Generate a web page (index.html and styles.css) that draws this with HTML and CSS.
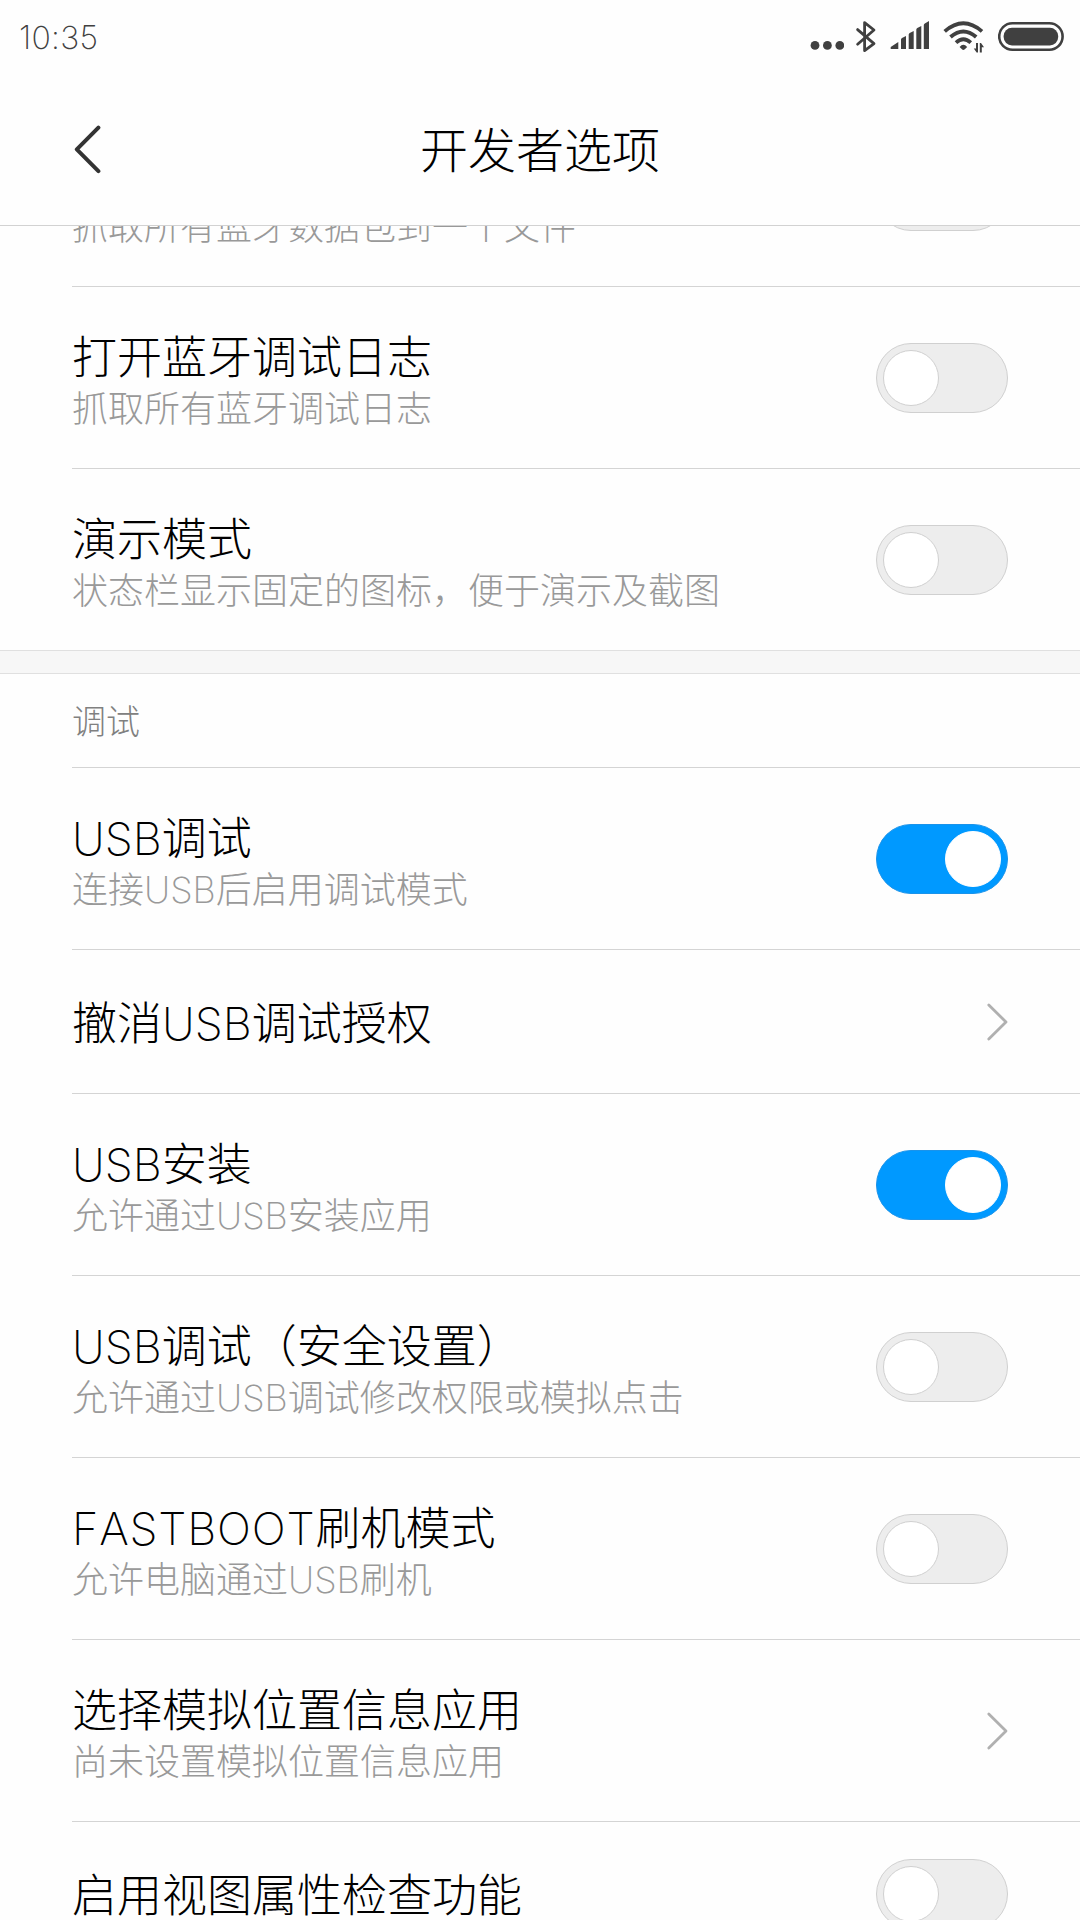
FILE: index.html
```html
<!DOCTYPE html>
<html lang="zh-CN">
<head>
    <meta charset="UTF-8">
    <meta name="viewport" content="width=device-width, initial-scale=1.0">
    <title>开发者选项</title>
    <link rel="stylesheet" href="styles.css">
</head>
<body>
    <div class="screen">
        <div class="status-bar">
            <span class="time">10:35</span>
            <div class="status-icons">
                <svg width="34" height="74" viewBox="810 0 34 74">
                    <circle cx="815" cy="45.4" r="4.4"/>
                    <circle cx="827.4" cy="45.4" r="4.4"/>
                    <circle cx="839.8" cy="45.4" r="4.4"/>
                </svg>
                <svg width="24" height="74" viewBox="854 0 24 74">
                    <path class="line" stroke-width="2.8" d="M857.6 29.6 L874 43.6 L864.6 50.6 V22.6 L874 30 L857.6 44.2"/>
                </svg>
                <svg width="40" height="74" viewBox="890 0 40 74">
                    <path d="M890.7 49 V47 L898.3 42 V49 Z M901 49 V39.5 Q901 38.5 902 38 L906 36 V49 Z M908.7 49 V34.5 Q908.7 33.5 909.7 33 L913.7 31 V49 Z M916.3 49 V29.5 Q916.3 28.5 917.3 28 L921.3 26 V49 Z M923.8 49 V25 Q923.8 24 924.8 23.4 L929 21 V49 Z"/>
                </svg>
                <svg width="42" height="74" viewBox="943 0 42 74">
                    <path class="line butt" stroke-width="3.8" d="M944.7 31.4 Q963.3 15.2 982 31.4 M950.5 37 Q963.3 25.8 976.2 37 M956 42.6 Q963.3 35.8 970.8 42.6"/>
                    <path d="M959.6 47 Q963.3 42.4 967.2 47 L964.5 49.6 Q963.3 50.4 962.2 49.6 Z"/>
                    <path d="M976 43 H978 V52.4 H976.6 L973.8 48.4 H976 Z"/>
                    <path d="M979.8 52.4 V43 H981 L984 47.2 H981.8 V52.4 Z"/>
                </svg>
                <svg width="67" height="74" viewBox="998 0 67 74">
                    <rect class="line" stroke-width="2.6" x="999.2" y="23.3" width="63.4" height="26.4" rx="13.2"/>
                    <rect x="1003.6" y="27.7" width="54.6" height="17.8" rx="8.4"/>
                </svg>
            </div>
        </div>

        <div class="title-bar">
            <svg class="back" width="28" height="50" viewBox="74 125 28 50">
                <path d="M98.4 127.6 L76.8 149.3 L98.4 171.2"/>
            </svg>
            <h1>开发者选项</h1>
        </div>

        <div class="content">
            <div class="list">
                <div class="item clipped">
                    <div class="desc">抓取所有蓝牙数据包到一个文件</div>
                    <div class="switch"></div>
                </div>
                <div class="item">
                    <div class="text">
                        <div class="name">打开蓝牙调试日志</div>
                        <div class="desc">抓取所有蓝牙调试日志</div>
                    </div>
                    <div class="switch"></div>
                </div>
                <div class="item last">
                    <div class="text">
                        <div class="name">演示模式</div>
                        <div class="desc">状态栏显示固定的图标，便于演示及截图</div>
                    </div>
                    <div class="switch"></div>
                </div>
            </div>

            <div class="divider"></div>

            <div class="list">
                <div class="item section">调试</div>
                <div class="item">
                    <div class="text">
                        <div class="name">USB调试</div>
                        <div class="desc">连接USB后启用调试模式</div>
                    </div>
                    <div class="switch on"></div>
                </div>
                <div class="item single">
                    <div class="text">
                        <div class="name">撤消USB调试授权</div>
                    </div>
                    <svg class="arrow" width="24" height="40" viewBox="0 0 24 40"><path d="M4.8 3 L22 20 L4.8 37"/></svg>
                </div>
                <div class="item">
                    <div class="text">
                        <div class="name">USB安装</div>
                        <div class="desc">允许通过USB安装应用</div>
                    </div>
                    <div class="switch on"></div>
                </div>
                <div class="item">
                    <div class="text">
                        <div class="name">USB调试（安全设置）</div>
                        <div class="desc">允许通过USB调试修改权限或模拟点击</div>
                    </div>
                    <div class="switch"></div>
                </div>
                <div class="item">
                    <div class="text">
                        <div class="name"><span class="wide">FASTBOOT</span>刷机模式</div>
                        <div class="desc">允许电脑通过USB刷机</div>
                    </div>
                    <div class="switch"></div>
                </div>
                <div class="item">
                    <div class="text">
                        <div class="name">选择模拟位置信息应用</div>
                        <div class="desc">尚未设置模拟位置信息应用</div>
                    </div>
                    <svg class="arrow" width="24" height="40" viewBox="0 0 24 40"><path d="M4.8 3 L22 20 L4.8 37"/></svg>
                </div>
                <div class="item single">
                    <div class="text">
                        <div class="name">启用视图属性检查功能</div>
                    </div>
                    <div class="switch"></div>
                </div>
            </div>
        </div>
    </div>
</body>
</html>
```
FILE: styles.css
```css
*,
*::before {
    box-sizing: border-box;
}
body {
    margin: 0;
    background-color: #fefefe;
    font-family: Inter, "Noto Sans CJK SC", sans-serif;
    font-weight: 200;
    font-kerning: none;
    color: #000;
}
.screen {
    display: flex;
    flex-direction: column;
    width: 1080px;
    height: 1920px;
    overflow: hidden;
}

/* status bar */
.status-bar {
    display: flex;
    justify-content: space-between;
    align-items: center;
    flex: none;
    height: 74px;
    padding: 0 15px 0 19px;
}
.time {
    font-size: 32px;
    letter-spacing: 0.3px;
    color: #404040;
}
.status-icons {
    display: flex;
    fill: #404040;
}
.status-icons svg {
    margin-left: 12px;
}
.status-icons svg:nth-child(2) {
    margin-left: 10px;
}
.status-icons svg:nth-child(4),
.status-icons svg:nth-child(5) {
    margin-left: 13px;
}
.line {
    fill: none;
    stroke: #404040;
    stroke-linejoin: round;
    stroke-linecap: round;
}
.butt {
    stroke-linecap: butt;
}

/* title bar */
.title-bar {
    display: flex;
    align-items: center;
    flex: none;
    height: 152px;
    padding: 0 74px;
    border-bottom: 1px solid #d2d2d2;
}
.back {
    fill: none;
    stroke: #333;
    stroke-width: 4;
    stroke-linecap: round;
    stroke-linejoin: round;
}
.title-bar h1 {
    flex: 1;
    margin: 0 28px 0 0;
    padding-top: 3px;
    text-align: center;
    font-size: 48px;
    line-height: 60px;
    font-weight: 200;
}

/* settings list */
.content {
    flex: 1;
    min-height: 0;
    overflow: hidden;
}
.item {
    display: flex;
    align-items: center;
    justify-content: space-between;
    height: 182px;
    margin-left: 72px;
    padding-right: 72px;
    border-bottom: 1px solid #d4d4d4;
}
.item.last {
    height: 181px;
    border-bottom: none;
}
.item.single {
    height: 144px;
}
.item.section {
    height: 94px;
    padding-bottom: 2px;
    font-size: 34px;
    color: #808080;
}
/* row scrolled halfway under the title bar */
.item.clipped {
    height: 61px;
    align-items: flex-end;
}
.item.clipped .desc {
    margin-bottom: 35px;
}
.item.clipped .switch {
    margin-bottom: 55px;
}
.text {
    padding-top: 8px;
}
.single .text {
    padding-top: 5px;
}
.name {
    font-size: 45px;
    line-height: 54px;
}
.name .wide {
    letter-spacing: 0.8px;
}
.desc {
    font-size: 36px;
    line-height: 48px;
    color: #999;
}
.divider {
    height: 24px;
    background-color: #f7f7f7;
    border-top: 1px solid #e0e0e0;
    border-bottom: 1px solid #e0e0e0;
}

.switch {
    flex: none;
    width: 132px;
    height: 70px;
    padding: 6px;
    border: 1px solid #d0d0d0;
    border-radius: 35px;
    background-color: #ededed;
}
.switch::before {
    content: "";
    display: block;
    width: 56px;
    height: 56px;
    border: 1px solid #d0d0d0;
    border-radius: 50%;
    background-color: #fff;
}
.switch.on {
    border-color: #1a93ea;
    background-color: #0099ff;
}
.switch.on::before {
    margin-left: auto;
    border-color: #fff;
}
.arrow {
    fill: none;
    stroke: #b0b0b0;
    stroke-width: 2.8;
    stroke-linecap: round;
    stroke-linejoin: round;
}
```
